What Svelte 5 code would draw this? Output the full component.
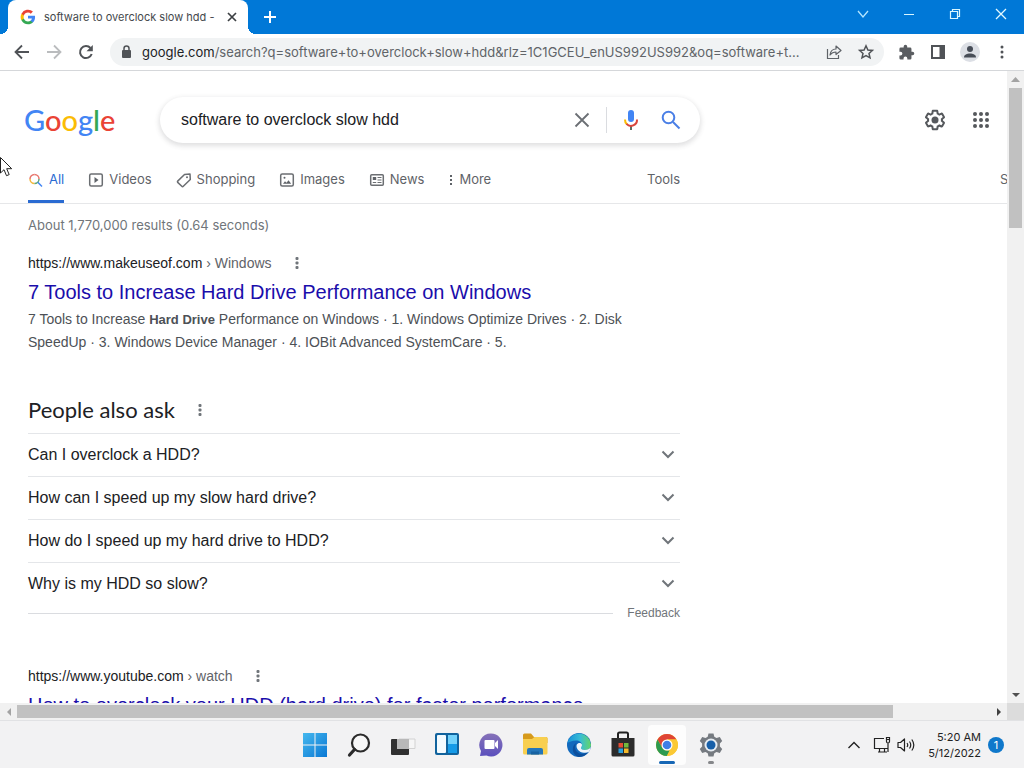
<script>
  const questions = [
    'Can I overclock a HDD?',
    'How can I speed up my slow hard drive?',
    'How do I speed up my hard drive to HDD?',
    'Why is my HDD so slow?'
  ];
  let query = $state('software to overclock slow hdd');
</script>

{#snippet googleG()}
  <svg width="16" height="16" viewBox="0 0 24 24" aria-hidden="true">
    <path fill="#4285f4" d="M22.6 12.2c0-.8-.1-1.5-.2-2.2H12v4.3h5.9a5 5 0 0 1-2.2 3.3v2.8h3.6c2.1-2 3.3-4.8 3.3-8.2z" />
    <path fill="#34a853" d="M12 23c3 0 5.500-1 7.300-2.700l-3.600-2.700c-1 .7-2.200 1-3.700 1-2.900 0-5.300-1.900-6.200-4.500H2.200v2.800A11 11 0 0 0 12 23z" />
    <path fill="#fbbc05" d="M5.800 14.100a6.600 6.600 0 0 1 0-4.200V7.100H2.200a11 11 0 0 0 0 9.900z" />
    <path fill="#ea4335" d="M12 5.400c1.600 0 3.100.6 4.200 1.600l3.200-3.100A11 11 0 0 0 2.200 7.100l3.600 2.800C6.700 7.300 9.100 5.400 12 5.400z" />
  </svg>
{/snippet}

{#snippet dots()}
  <svg width="16" height="16" viewBox="0 0 16 16" fill="#70757a" aria-hidden="true">
    <rect x="6.500" y="2" width="3" height="3" rx="1" /><rect x="6.500" y="6.500" width="3" height="3" rx="1" /><rect x="6.500" y="11" width="3" height="3" rx="1" />
  </svg>
{/snippet}

<div class="screen">
  <header class="tabstrip">
    <div class="tab">
      {@render googleG()}
      <span class="tab-title">software to overclock slow hdd -</span>
      <button class="tab-close" aria-label="Close tab">
        <svg width="16" height="16" viewBox="0 0 16 16" stroke="#3c4043" stroke-width="1.700"><path d="M4 4l8 8M12 4l-8 8" /></svg>
      </button>
    </div>
    <button class="new-tab" aria-label="New tab">
      <svg width="16" height="16" viewBox="0 0 16 16" stroke="#fff" stroke-width="2"><path d="M8 2v12M2 8h12" /></svg>
    </button>
    <div class="window-buttons">
      <button aria-label="Search tabs"><svg width="14" height="14" viewBox="0 0 14 14" fill="none" stroke="#b4e6ff" stroke-width="1.300"><path d="M2 4l5 6 5-6" /></svg></button>
      <button aria-label="Minimize"><svg width="14" height="14" viewBox="0 0 14 14" stroke="#d8f6ff"><path d="M2 7.500h10" /></svg></button>
      <button aria-label="Restore"><svg width="14" height="14" viewBox="0 0 14 14" fill="none" stroke="#d8f6ff" stroke-width="1.200"><path d="M2.500 4.500h7v7h-7zM4.500 4.500v-2h7v7h-2" /></svg></button>
      <button aria-label="Close"><svg width="14" height="14" viewBox="0 0 14 14" stroke="#e4f9ff" stroke-width="1.300"><path d="M2 2l10 10M12 2L2 12" /></svg></button>
    </div>
  </header>

  <div class="toolbar">
    <button aria-label="Back"><svg width="18" height="18" viewBox="0 0 18 18" fill="none" stroke="#505357" stroke-width="1.800"><path d="M16 9H3M9 2.500L2.500 9 9 15.500" /></svg></button>
    <button aria-label="Forward"><svg width="18" height="18" viewBox="0 0 18 18" fill="none" stroke="#babcbe" stroke-width="1.800"><path d="M2 9h13M9 2.500L15.500 9 9 15.500" /></svg></button>
    <button aria-label="Reload"><svg width="18" height="18" viewBox="0 0 18 18" fill="none" stroke="#505357" stroke-width="2"><path d="M14.700 11A6 6 0 1 1 13.500 5" /><path d="M15.800 2v6.300H9.500z" fill="#505357" stroke="none" /></svg></button>
    <div class="omnibox">
      <svg width="16" height="16" viewBox="0 0 16 16" aria-hidden="true"><rect x="4" y="6" width="9" height="8" rx="1" fill="#505357" /><path d="M6 7V4.500a2.500 2.500 0 0 1 5 0V7" fill="none" stroke="#505357" stroke-width="1.500" /></svg>
      <span class="url"><b>google.com</b>/search?q=software+to+overclock+slow+hdd&amp;rlz=1C1GCEU_enUS992US992&amp;oq=software+t...</span>
      <button aria-label="Share"><svg width="18" height="18" viewBox="0 0 18 18" fill="none" stroke="#5f6368" stroke-width="1.200"><path d="M2.500 6v9.500h11V12" /><path d="M5 12c.5-4 3-6 6-6V3l5 4.500-5 4V9c-2.500 0-4.500 1-6 3z" stroke-linejoin="round" /></svg></button>
      <button aria-label="Bookmark"><svg width="18" height="18" viewBox="0 0 18 18" fill="none" stroke="#505357" stroke-width="1.500"><path d="M9 2.800l1.900 4.200 4.500.4-3.400 3 1 4.400L9 12.500l-4 2.300 1-4.400-3.400-3 4.500-.4z" /></svg></button>
    </div>
    <button aria-label="Extensions"><svg width="17" height="17" viewBox="0 0 24 24" fill="#5a5d61"><path d="M20.500 11H19V7a2 2 0 0 0-2-2h-4V3.500a2.500 2.500 0 0 0-5 0V5H4a2 2 0 0 0-2 2v3.800h1.500a2.700 2.700 0 0 1 0 5.400H2V20a2 2 0 0 0 2 2h3.800v-1.500a2.700 2.700 0 0 1 5.400 0V22H17a2 2 0 0 0 2-2v-4h1.500a2.500 2.500 0 0 0 0-5z" /></svg></button>
    <button aria-label="Side panel"><svg width="16" height="16" viewBox="0 0 16 16"><path d="M2 2h12v12H2z" fill="#fff" stroke="#505357" stroke-width="2" /><path d="M9.500 2H14v12H9.500z" fill="#505357" /></svg></button>
    <button class="avatar" aria-label="Profile"><svg width="20" height="20" viewBox="0 0 20 20"><circle cx="10" cy="10" r="10" fill="#dcdfe5" /><circle cx="10" cy="7" r="3" fill="#474d57" /><path d="M4 15.500c0-3 3-4 6-4s6 1 6 4z" fill="#474d57" /></svg></button>
    <button aria-label="Menu"><svg width="16" height="16" viewBox="0 0 16 16" fill="#505357"><circle cx="8" cy="3" r="1.500" /><circle cx="8" cy="8" r="1.500" /><circle cx="8" cy="13" r="1.500" /></svg></button>
  </div>

  <div class="viewport">
    <main class="page">
      <div class="search-head">
        <a class="logo" href="#home" aria-label="Google"><span class="b">G</span><span class="r">o</span><span class="y">o</span><span class="b">g</span><span class="g">l</span><span class="r">e</span></a>
        <form class="searchbox">
          <input aria-label="Search" type="text" bind:value={query} />
          <button type="button" aria-label="Clear"><svg width="20" height="20" viewBox="0 0 20 20" stroke="#6b6f74" stroke-width="1.800"><path d="M3.500 3.500l13 13M16.500 3.500l-13 13" /></svg></button>
          <span class="divider"></span>
          <button type="button" aria-label="Search by voice"><svg width="24" height="24" viewBox="0 0 24 24" fill="none"><rect x="9" y="2" width="6" height="12" rx="3" fill="#4285f4" /><path d="M11 18h2v4h-2z" fill="#5c6f63" /><path d="M6 11.500a6 6 0 0 0 2 4.800" stroke="#fbbc04" stroke-width="2" /><path d="M7.500 15.800A6 6 0 0 0 18 11.500" stroke="#d9453b" stroke-width="2" /></svg></button>
          <button type="button" aria-label="Search"><svg width="24" height="24" viewBox="0 0 24 24" fill="none" stroke="#4a7fe6" stroke-width="2"><circle cx="9.500" cy="9.500" r="5.800" /><path d="M14 14l6.500 6.500" /></svg></button>
        </form>
        <div class="head-actions">
          <button aria-label="Settings"><svg width="24" height="24" viewBox="0 0 24 24" fill="#55585c"><path d="M13.850 22.250h-3.700c-.74 0-1.360-.54-1.450-1.270l-.27-1.890c-.27-.14-.53-.29-.79-.46l-1.800.72c-.7.26-1.470-.03-1.810-.65L2.200 15.530c-.35-.66-.2-1.440.36-1.880l1.530-1.190c-.01-.15-.02-.3-.02-.46 0-.15.01-.31.02-.46l-1.520-1.190c-.59-.45-.74-1.260-.37-1.880l1.850-3.190c.34-.62 1.110-.9 1.790-.63l1.810.73c.26-.17.52-.32.78-.46l.27-1.910c.09-.7.71-1.250 1.440-1.250h3.700c.74 0 1.360.54 1.450 1.270l.27 1.890c.27.14.53.29.79.46l1.800-.72c.71-.26 1.480.03 1.820.65l1.840 3.180c.36.66.2 1.440-.36 1.880l-1.520 1.190c.01.15.02.3.02.46s-.01.31-.02.46l1.520 1.190c.56.45.72 1.230.37 1.860l-1.860 3.220c-.34.62-1.110.9-1.800.63l-1.800-.72c-.26.17-.52.32-.78.46l-.27 1.910c-.1.68-.72 1.220-1.460 1.220zm-3.230-2h2.760l.37-2.550.53-.22c.44-.18.88-.44 1.340-.78l.45-.34 2.380.96 1.380-2.400-2.030-1.580.07-.56c.03-.26.06-.51.06-.78s-.03-.53-.06-.78l-.07-.56 2.030-1.580-1.390-2.400-2.390.96-.45-.35c-.42-.32-.87-.58-1.330-.77l-.52-.22-.37-2.550h-2.760l-.37 2.550-.53.21c-.44.19-.88.44-1.340.79l-.45.33-2.380-.95-1.390 2.390 2.030 1.580-.07.56a7 7 0 0 0-.06.79c0 .26.02.53.06.78l.07.56-2.030 1.580 1.380 2.400 2.390-.96.45.35c.43.33.86.58 1.330.77l.53.22z" /><circle cx="12" cy="12" r="3.500" /></svg></button>
          <button aria-label="Google apps"><svg width="24" height="24" viewBox="0 0 24 24" fill="#55585c">{#each [6, 12, 18] as y}{#each [6, 12, 18] as x}<circle cx={x} cy={y} r="2" />{/each}{/each}</svg></button>
        </div>
      </div>

      <nav class="filters">
        <div class="filter-main">
          <a class="active" href="#all"><svg width="16" height="16" viewBox="0 0 16 16" fill="none" stroke-width="1.500"><path d="M2 7a4.500 4.500 0 0 1 4.500-4.500" stroke="#e8756c" /><path d="M6.500 2.500A4.500 4.500 0 0 1 11 7" stroke="#e8756c" /><path d="M2 7a4.500 4.500 0 0 0 4.500 4.500" stroke="#f3b93d" /><path d="M6.500 11.500A4.500 4.500 0 0 0 11 7" stroke="#5fa777" /><path d="M9.800 10.300l4.200 4.200" stroke="#4285f4" /></svg>All</a>
          <a href="#videos"><svg width="16" height="16" viewBox="0 0 16 16" fill="none" stroke="#6b6e72" stroke-width="1.500"><rect x="1.700" y="2" width="12.600" height="12" rx="1.500" /><path d="M6.500 5v6l4-3z" fill="#5f6368" stroke="none" /></svg>Videos</a>
          <a href="#shopping"><svg width="16" height="16" viewBox="0 0 16 16" fill="none" stroke="#6b6e72" stroke-width="1.500" stroke-linejoin="round"><path d="M8.500 2.500L14 2l.3 5.500-7 6.800a1 1 0 0 1-1.500 0L1.700 10.400a1 1 0 0 1 0-1.300z" /><circle cx="11" cy="5.300" r="1" fill="#6b6e72" stroke="none" /></svg>Shopping</a>
          <a href="#images"><svg width="16" height="16" viewBox="0 0 16 16" fill="none" stroke="#6b6e72" stroke-width="1.500"><rect x="1.700" y="2" width="12.600" height="12" rx="1.500" /><path d="M4 11.800l2-2.500 1.500 1.500 2-2.500 2.700 3.500z" fill="#5f6368" stroke="none" /><circle cx="5.500" cy="5.700" r="1" fill="#5f6368" stroke="none" /></svg>Images</a>
          <a href="#news"><svg width="16" height="16" viewBox="0 0 16 16" fill="none" stroke="#6b6e72" stroke-width="1.500"><rect x="1.700" y="2.700" width="12.600" height="10.600" rx="1" /><path d="M3.800 5h3.400v3H3.800z" fill="#5f6368" stroke="none" /><path d="M8.500 5.500h4M8.500 8h4M3.800 10.500h3.400M8.500 10.500h4" stroke-width="1.200" /></svg>News</a>
          <a class="more" href="#more"><svg width="6" height="16" viewBox="0 0 6 16" fill="#5f6368"><rect x="2" y="3" width="2" height="2" /><rect x="2" y="7" width="2" height="2" /><rect x="2" y="11" width="2" height="2" /></svg>More</a>
          <button class="tools">Tools</button>
        </div>
        <span class="safe">S</span>
      </nav>

      <section class="results">
        <p class="stats">About 1,770,000 results (0.64 seconds)</p>
        <article>
          <div class="cite"><span>https://www.makeuseof.com <i>› Windows</i></span><button aria-label="About this result">{@render dots()}</button></div>
          <h3><a href="#makeuseof">7 Tools to Increase Hard Drive Performance on Windows</a></h3>
          <p class="snippet">7 Tools to Increase <strong>Hard Drive</strong> Performance on Windows · 1. Windows Optimize Drives · 2. Disk SpeedUp · 3. Windows Device Manager · 4. IOBit Advanced SystemCare · 5.</p>
        </article>

        <section class="ask">
          <h2>People also ask <button aria-label="About these questions">{@render dots()}</button></h2>
          {#each questions as question}
            <button class="question"><span>{question}</span><svg width="24" height="24" viewBox="0 0 24 24" fill="none" stroke="#70757a" stroke-width="2"><path d="M6.500 8.500l5.500 5.500 5.500-5.500" /></svg></button>
          {/each}
          <div class="feedback"><span class="rule"></span><a href="#feedback">Feedback</a></div>
        </section>

        <article>
          <div class="cite"><span>https://www.youtube.com <i>› watch</i></span><button aria-label="About this result">{@render dots()}</button></div>
          <h3><a href="#youtube">How to overclock your HDD (hard drive) for faster performance</a></h3>
        </article>
      </section>
    </main>
    <div class="vbar"><button aria-label="Scroll up"><svg width="9" height="5" viewBox="0 0 9 5"><path d="M0 5l4.500-5L9 5z" fill="#a3a3a3" /></svg></button><div class="vtrack"><div class="vthumb"></div></div><button aria-label="Scroll down"><svg width="8" height="4" viewBox="0 0 8 4"><path d="M0 0l4 4 4-4z" fill="#505050" /></svg></button></div>
    <div class="hbar"><button aria-label="Scroll left"><svg width="4" height="8" viewBox="0 0 4 8"><path d="M4 0L0 4l4 4z" fill="#a3a3a3" /></svg></button><div class="htrack"><div class="hthumb"></div></div><button aria-label="Scroll right"><svg width="4" height="8" viewBox="0 0 4 8"><path d="M0 0l4 4-4 4z" fill="#404040" /></svg></button></div>
    <div class="corner"></div>
  </div>

  <footer class="taskbar">
    <div class="apps">
      <button aria-label="Start"><svg width="28" height="28" viewBox="0 0 28 28"><defs><linearGradient id="win" x1="0" y1="0" x2="1" y2="1"><stop offset="0" stop-color="#45b8ee" /><stop offset="1" stop-color="#0a78d4" /></linearGradient></defs><path fill="url(#win)" d="M2 2h11.500v11.500H2zM14.500 2H26v11.500H14.500zM2 14.500h11.500V26H2zM14.500 14.500H26V26H14.500z" /></svg></button>
      <button aria-label="Search"><svg width="28" height="28" viewBox="0 0 28 28" fill="none" stroke="#2b2b2b"><circle cx="15.500" cy="12" r="8.500" stroke-width="2.200" fill="#f8f8f8" /><path d="M9.500 18.500L4.500 24" stroke-width="3.200" stroke-linecap="round" /></svg></button>
      <button aria-label="Task view"><svg width="28" height="28" viewBox="0 0 28 28"><path d="M10 8h16v9.500H10z" fill="#f6f6f6" stroke="#d2d2d2" /><rect x="2" y="8" width="18" height="16" rx="1" fill="#303030" /><path d="M8 8h12v10H8z" fill="#b8b8b8" /></svg></button>
      <button aria-label="Widgets"><svg width="28" height="28" viewBox="0 0 28 28"><rect x="2" y="2" width="24" height="22" rx="2" fill="#11639d" /><rect x="4" y="4" width="9" height="18" rx="1" fill="#f3fbff" /><path d="M15 4h9v9h-9z" fill="#73d2fb" /><path d="M15 13h9v9h-9z" fill="#159be8" /></svg></button>
      <button aria-label="Chat"><svg width="28" height="28" viewBox="0 0 28 28"><defs><linearGradient id="chat" x1="0" y1="0" x2="0" y2="1"><stop offset="0" stop-color="#8672b8" /><stop offset="1" stop-color="#5b50bd" /></linearGradient></defs><path d="M14 2.500a11.500 11.500 0 1 1-4.500 22.100L3 25l1-5A11.500 11.500 0 0 1 14 2.500z" fill="url(#chat)" /><rect x="7.500" y="9" width="10" height="9" rx="1" fill="#fff" /><path d="M18 12l3-3v9l-3-3z" fill="#fff" /></svg></button>
      <button aria-label="File Explorer"><svg width="28" height="28" viewBox="0 0 28 28"><path d="M2 4a1.500 1.500 0 0 1 1.500-1.500H10l3 3.500h12a1.500 1.500 0 0 1 1.500 1.500V12H2z" fill="#d69a1c" /><path d="M2 8h9l2.500-2H25a1.500 1.500 0 0 1 1.500 1.500V22a1.500 1.500 0 0 1-1.500 1.500H3.500A1.500 1.500 0 0 1 2 22z" fill="#f8cf4f" /><path d="M6 23.500V19a2 2 0 0 1 2-2h12a2 2 0 0 1 2 2v4.500z" fill="#2476ba" /><path d="M10 20.500h8v3h-8z" fill="#1762a2" /></svg></button>
      <button aria-label="Edge"><svg width="28" height="28" viewBox="0 0 28 28"><defs><linearGradient id="edge" x1="0" y1="0" x2="1" y2="0"><stop offset="0" stop-color="#1690d8" /><stop offset=".55" stop-color="#39bdd5" /><stop offset="1" stop-color="#63d567" /></linearGradient></defs><circle cx="14" cy="14" r="12" fill="#1269bd" /><path d="M2.300 12A12 12 0 0 1 26 13.500c0 4-3 5.500-6 5.500-2.500 0-4-1-4-2 0-.8 1-1.300 1-3 0-2.500-2.500-4.500-6-4.500-4 0-7 1.500-8.700 2.500z" fill="url(#edge)" /><path d="M11.500 12a6 6 0 0 0-1.500 4c0 5 5 8 10 6.500 1.500-.4 3-1 3.700-1.900A12 12 0 0 1 14 26c-4-1-7-5-6-9.500.4-2 1.700-3.600 3.500-4.500z" fill="#0c4f9c" /><path d="M11.700 13.700c.8-1.200 2-1.900 3.300-1.700 1.200.2 2 1 2 2 0 1.700-1 2.200-1 3 0 1 1.500 2 4 2 2.200 0 4.500-.8 5.500-3 0 1.800-.5 3.500-1.500 4.800-1.500 1-3.200 1.200-5 1-5-.4-8.300-4.500-7.300-8.100z" fill="#eff5fa" /></svg></button>
      <button aria-label="Microsoft Store"><svg width="28" height="28" viewBox="0 0 28 28"><path d="M9 8V3a1.500 1.500 0 0 1 1.500-1.500h7A1.500 1.500 0 0 1 19 3v5" fill="none" stroke="#202020" stroke-width="2" /><path d="M2.500 7h23v17a1.500 1.500 0 0 1-1.500 1.500H4A1.500 1.500 0 0 1 2.500 24z" fill="#2c2c2c" /><path d="M9.500 12H14v4.500H9.500z" fill="#e44c34" /><path d="M15 12h4.500v4.500H15z" fill="#72b83c" /><path d="M9.500 17.500H14V22H9.500z" fill="#2aa1e0" /><path d="M15 17.500h4.500V22H15z" fill="#f4b92b" /></svg></button>
      <button class="current" aria-label="Chrome"><svg width="28" height="28" viewBox="0 0 28 28"><circle cx="14" cy="14" r="11" fill="#fbc934" /><path d="M4.500 8.500A11 11 0 0 1 23.500 8.500H14L9.200 16.700z" fill="#df4435" /><path d="M4.500 8.500l4.700 8.200A5.500 5.500 0 0 0 14 19.500h2.500L13.800 25A11 11 0 0 1 4.500 8.500z" fill="#2d9a50" /><path d="M18.800 16.700L14 25a11 11 0 0 0 9.500-16.500H14z" fill="#fbc934" /><circle cx="14" cy="14" r="5.500" fill="#fff" /><circle cx="14" cy="14" r="4.300" fill="#3f7fe8" /></svg></button>
      <button class="open" aria-label="Settings"><svg width="28" height="28" viewBox="0 0 28 28"><path d="M11.500 2.500h5l.8 3.200 2.200 1.200 3.300-1 2.400 4.200-2.300 2.500v2.800l2.300 2.500-2.400 4.200-3.300-1-2.200 1.200-.8 3.200h-5l-.8-3.200-2.200-1.200-3.300 1-2.400-4.200 2.300-2.500v-2.800l-2.300-2.500 2.400-4.200 3.300 1 2.200-1.200z" fill="#757a80" /><circle cx="14" cy="14" r="6.500" fill="#e7edf3" /><circle cx="14" cy="14" r="4.500" fill="#165fa9" /></svg></button>
    </div>
    <div class="tray">
      <button class="hidden-icons" aria-label="Show hidden icons"><svg width="16" height="16" viewBox="0 0 16 16" fill="none" stroke="#222" stroke-width="1.400"><path d="M2.500 11L8 5.500l5.500 5.500" /></svg></button>
      <button aria-label="Network"><svg width="20" height="20" viewBox="0 0 20 20" fill="none" stroke="#222" stroke-width="1.200"><path d="M12 3.500H2.500v10H16M6 17h9M7.500 14v3M12.500 14v3" /><path d="M14.500 2.500h3v4a1.500 1.500 0 0 1-3 0zM14.500 4.500h3M16 8v9" /></svg></button>
      <button aria-label="Volume"><svg width="20" height="20" viewBox="0 0 20 20" fill="none" stroke="#222" stroke-width="1.200"><path d="M2 7.500h2.500L8.500 4v12l-4-3.500H2z" stroke-linejoin="round" /><path d="M11 8q1.500 2 0 4M13.500 6.500q2.500 3.500 0 7M15.800 4.500q4 5.500 0 11" /></svg></button>
      <time datetime="2022-05-12T05:20">5:20 AM<br />5/12/2022</time>
      <span class="badge">1</span>
    </div>
  </footer>

  <svg class="pointer" width="13" height="20" viewBox="0 0 13 20" aria-hidden="true"><path d="M.5.5v15.500l3.500-3.300 2.500 6 2.700-1.100-2.500-5.900h5z" fill="#fff" stroke="#222" /></svg>
</div>

<style>
  :global(body) { margin: 0; background: #f2f2f2; }
  .screen { display: flex; flex-direction: column; height: 100vh; overflow: hidden; position: relative; font-family: "Liberation Sans", Arial, sans-serif; color: #202124; }
  button { border: 0; background: none; padding: 0; margin: 0; font: inherit; color: inherit; display: flex; align-items: center; justify-content: center; flex: none; }
  svg { display: block; flex: none; }
  a { text-decoration: none; color: inherit; }
  h2, h3, p { margin: 0; font-weight: 400; }

  .tabstrip { display: flex; flex: none; height: 34px; background: #0078d7; padding-left: 8px; }
  .tab { position: relative; display: flex; align-items: center; width: 240px; box-sizing: border-box; padding: 0 8px 0 12px; gap: 8px; background: #fff; border-radius: 8px 8px 0 0; font: 11px Inter, "Noto Sans", sans-serif; color: #45494d; }
  .tab::before, .tab::after { content: ""; position: absolute; bottom: 0; width: 8px; height: 8px; }
  .tab::before { left: -8px; background: radial-gradient(circle at 0 0, #0078d7 8px, #fff 8px); }
  .tab::after { right: -8px; background: radial-gradient(circle at 100% 0, #0078d7 8px, #fff 8px); }
  .tab-title { flex: 1; white-space: nowrap; overflow: hidden; }
  .new-tab { width: 44px; }
  .window-buttons { display: flex; margin-left: auto; height: 28px; }
  .window-buttons button { width: 46px; }

  .toolbar { display: flex; align-items: center; flex: none; height: 36px; padding: 0 6px; background: #fff; border-bottom: 1px solid #d5d7da; }
  .toolbar button { width: 32px; height: 32px; }
  .omnibox { display: flex; align-items: center; flex: 1; min-width: 0; height: 28px; margin: 0 6px 0 8px; padding: 0 2px 0 8px; border-radius: 14px; background: #f1f3f4; }
  .url { flex: 1; min-width: 0; margin-left: 8px; white-space: nowrap; overflow: hidden; font: 13px Inter, "Noto Sans", sans-serif; color: #606468; }
  .url b { font-weight: 400; color: #202124; }

  .viewport { flex: 1; min-height: 0; display: grid; grid-template: minmax(0, 1fr) 17px / minmax(0, 1fr) 17px; background: #fff; }
  .page { overflow: hidden; min-width: 0; }
  .search-head { display: flex; align-items: center; padding: 26px 6px 0 24px; }
  .logo { width: 136px; font: 500 29px/46px Lato, sans-serif; }
  .b { color: #4285f4; } .r { color: #ea4335; } .y { color: #fbbc05; } .g { color: #34a853; }
  .searchbox { display: flex; align-items: center; width: 540px; height: 46px; box-sizing: border-box; padding: 0 9px 0 21px; border-radius: 23px; background: #fff; box-shadow: 0 2px 5px 1px rgba(64, 60, 67, .16); }
  .searchbox input { flex: 1; min-width: 0; padding: 0; border: 0; outline: 0; background: none; font: 16px "Liberation Sans", Arial, sans-serif; color: #202124; }
  .searchbox button { width: 40px; height: 40px; }
  .divider { width: 1px; height: 26px; margin: 0 4px; background: #dadce0; }
  .head-actions { display: flex; margin-left: auto; gap: 6px; }
  .head-actions button { width: 40px; height: 40px; }

  .filters { display: flex; height: 61px; box-sizing: border-box; padding-left: 28px; border-bottom: 1px solid #e6e7e9; font: 13px Inter, sans-serif; color: #5f6368; white-space: nowrap; }
  .filter-main { display: flex; flex: none; width: 652px; gap: 24px; }
  .filters a { display: flex; align-items: center; gap: 5px; padding-top: 15px; border-bottom: 3px solid transparent; }
  .filters a svg { margin-top: 2px; }
  .filters a.active { color: #2a6bd2; border-color: #2a6bd2; }
  .tools { margin-left: auto; padding-top: 15px; padding-bottom: 3px; }
  .safe { margin-left: 320px; padding-top: 28px; }

  .results { width: 652px; padding-left: 28px; }
  .stats { padding-top: 9px; font: 13px/24px Inter, sans-serif; color: #70757a; }
  .cite { display: flex; align-items: center; gap: 17px; height: 24px; margin-top: 14px; font-size: 14px; }
  .cite i { font-style: normal; color: #5f6368; }
  h3 { font-size: 20px; line-height: 26px; padding-top: 4px; color: #1a0dab; white-space: nowrap; }
  .snippet { width: 600px; font-size: 14px; line-height: 23px; padding-top: 3px; color: #4d5156; }
  .snippet strong { font-size: 13px; }
  .ask { padding-top: 42px; }
  h2 { display: flex; align-items: center; gap: 17px; font: 22px/28px Lato, sans-serif; padding-bottom: 9px; color: #202124; }
  .question { width: 100%; height: 43px; justify-content: space-between; border-top: 1px solid #e4e6e9; font-size: 16px; text-align: left; }
  .feedback { display: flex; align-items: center; gap: 14px; height: 16px; margin-bottom: 43px; font-size: 12px; color: #70757a; }
  .rule { flex: 1; height: 1px; background: #dadce0; }

  .vbar { display: flex; flex-direction: column; background: #f1f1f1; }
  .vbar button { height: 17px; width: 17px; }
  .vtrack { flex: 1; padding: 0 2px 0 2px; }
  .vthumb { height: 140px; background: #c1c1c1; }
  .hbar { display: flex; background: #f1f1f1; }
  .hbar button { height: 17px; width: 17px; }
  .htrack { flex: 1; padding: 2px 0; }
  .hthumb { width: 90%; height: 13px; background: #c1c1c1; }
  .corner { background: #dcdcdc; }

  .taskbar { display: grid; grid-template-columns: 1fr auto 1fr; flex: none; height: 48px; box-sizing: border-box; border-top: 1px solid #e1e2e4; background: #f2f2f3; }
  .apps { grid-column: 2; display: flex; align-items: center; padding-left: 2px; }
  .apps button { position: relative; width: 44px; height: 40px; }
  .apps .current { width: 38px; margin: 0 3px; background: #fdfdfd; border-radius: 4px; }
  .current::after, .open::after { content: ""; position: absolute; bottom: 1px; left: 50%; height: 3px; border-radius: 2px; transform: translateX(-50%); }
  .current::after { width: 16px; background: #1767b5; }
  .open::after { width: 6px; background: #85878a; }
  .tray { display: flex; align-items: center; justify-content: flex-end; padding-right: 20px; font: 11px/16px Inter, "Noto Sans", sans-serif; color: #222; }
  .tray button { width: 24px; height: 24px; }
  .tray .hidden-icons { margin-right: 4px; }
  .tray time { margin: 0 7px 0 10px; text-align: right; }
  .badge { display: grid; place-items: center; width: 16px; height: 16px; border-radius: 8px; background: #0f78cb; color: #fff; font-size: 11px; }
  .pointer { position: absolute; left: 0; top: 157px; }
</style>
